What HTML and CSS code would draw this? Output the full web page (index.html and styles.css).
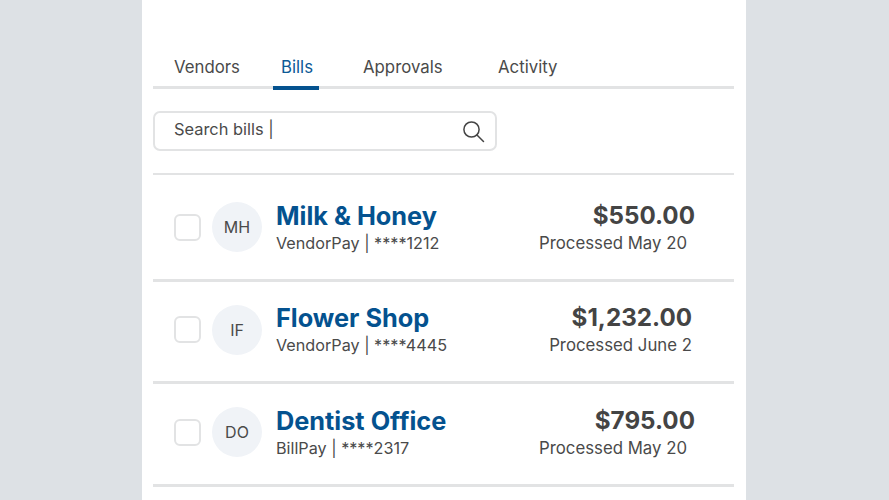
FILE: index.html
```html
<!DOCTYPE html>
<html lang="en">
<head>
<meta charset="utf-8">
<title>Bills</title>
<link rel="stylesheet" href="styles.css">
</head>
<body>
<main class="panel">
  <nav class="tabs">
    <a class="tab tab-vendors">Vendors</a>
    <a class="tab tab-bills active">Bills</a>
    <a class="tab tab-approvals">Approvals</a>
    <a class="tab tab-activity">Activity</a>
  </nav>
  <div class="search">
    <span class="search-text">Search bills |</span>
    <svg class="search-icon" viewBox="0 0 24 24" width="24" height="24" fill="none" stroke="#444" stroke-width="1.5" stroke-linecap="round"><circle cx="10.5" cy="10.5" r="7.6"/><path d="M16 16 22.5 22.5"/></svg>
  </div>
  <ul class="bills">
    <li class="bill bill-first">
      <span class="check"></span>
      <span class="avatar">MH</span>
      <div class="info"><div class="name">Milk &amp; Honey</div><div class="sub">VendorPay | ****1212</div></div>
      <div class="money"><div class="amount amount-in">$550.00</div><div class="status status-in">Processed May 20</div></div>
    </li>
    <li class="bill">
      <span class="check"></span>
      <span class="avatar">IF</span>
      <div class="info"><div class="name">Flower Shop</div><div class="sub">VendorPay | ****4445</div></div>
      <div class="money"><div class="amount">$1,232.00</div><div class="status">Processed June 2</div></div>
    </li>
    <li class="bill bill-last">
      <span class="check"></span>
      <span class="avatar">DO</span>
      <div class="info"><div class="name">Dentist Office</div><div class="sub">BillPay | ****2317</div></div>
      <div class="money"><div class="amount amount-in">$795.00</div><div class="status status-in">Processed May 20</div></div>
    </li>
  </ul>
</main>
</body>
</html>
```
FILE: styles.css
```css
* { box-sizing: border-box; }
html, body { margin: 0; height: 500px; overflow: hidden; }
body { background: #dde1e5; font-family: "Inter", "Liberation Sans", sans-serif; color: #4a4a4a; }
.panel { width: 604px; height: 500px; margin-left: 142px; background: #fff; padding: 42px 12px 0 11px; }
.tabs { display: flex; height: 47px; border-bottom: 3px solid #e2e3e4; }
.tab { height: 48px; padding-top: 15px; font-size: 16.8px; line-height: 20px; white-space: nowrap; }
.tab-vendors { margin-left: 21px; width: 99px; }
.tab-bills { width: 46px; padding-left: 8px; color: #0d5a96; border-bottom: 4px solid #04528f; }
.tab-approvals { width: 135px; margin-left: 44px; }
.search { display: flex; align-items: center; justify-content: space-between; width: 344px; height: 40px; margin-top: 22px; padding: 0 10px 0 19px; border: 2px solid #e2e3e4; border-radius: 7px; }
.search-text { font-size: 16.4px; padding-bottom: 4px; }
.search-icon { display: block; }
.bills { list-style: none; margin: 22px 0 0; padding: 0; border-top: 2px solid #e2e3e4; }
.bill { display: flex; align-items: center; height: 102px; padding: 0 0 4px 21px; border-bottom: 3px solid #e2e3e4; }
.bill-first { height: 107px; padding-bottom: 0; }
.bill-last { height: 103px; }
.check { width: 27px; height: 27px; border: 2px solid #e2e3e4; border-radius: 6px; }
.avatar { display: flex; align-items: center; justify-content: center; width: 50px; height: 50px; margin-left: 11px; border-radius: 50%; background: #f0f3f7; font-size: 16px; }
.info { margin-left: 14px; flex: 1; }
.name { font-size: 25.3px; line-height: 30px; font-weight: 700; color: #04528f; margin-bottom: 1px; }
.sub { font-size: 16.2px; line-height: 22px; }
.money { width: 170px; text-align: right; margin-right: 42px; }
.amount { font-size: 24.2px; line-height: 30px; font-weight: 700; color: #444; margin-bottom: 1px; }
.amount-in { margin-right: -3px; }
.status { font-size: 16.8px; line-height: 22px; white-space: nowrap; }
.status-in { margin-right: 5px; }
```
